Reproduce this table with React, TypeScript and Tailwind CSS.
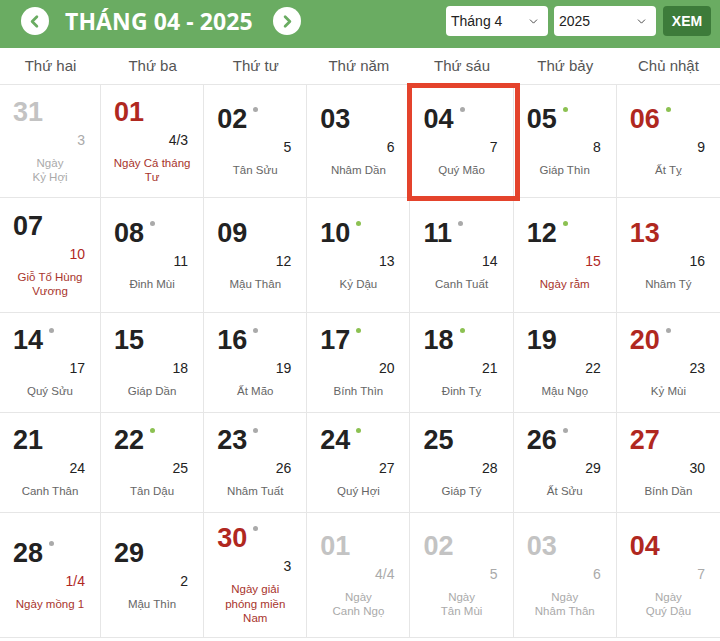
import React from 'react';
import { ChevronLeft, ChevronRight, ChevronDown } from 'lucide-react';

type Day = {
  d: string;
  l: string;
  label: string[];
  n?: 'red' | 'gray';
  dot?: 'g' | 'x';
  lr?: boolean; // lunar red
  br?: boolean; // label red
  o?: boolean; // other month
  sel?: boolean;
};

const weekDays = ['Thứ hai', 'Thứ ba', 'Thứ tư', 'Thứ năm', 'Thứ sáu', 'Thứ bảy', 'Chủ nhật'];

const rows: Day[][] = [
  [
    { d: '31', l: '3', label: ['Ngày', 'Kỷ Hợi'], n: 'gray', o: true },
    { d: '01', l: '4/3', label: ['Ngày Cá tháng', 'Tư'], n: 'red', br: true },
    { d: '02', l: '5', label: ['Tân Sửu'], dot: 'x' },
    { d: '03', l: '6', label: ['Nhâm Dần'] },
    { d: '04', l: '7', label: ['Quý Mão'], dot: 'x', sel: true },
    { d: '05', l: '8', label: ['Giáp Thìn'], dot: 'g' },
    { d: '06', l: '9', label: ['Ất Tỵ'], n: 'red', dot: 'g' },
  ],
  [
    { d: '07', l: '10', label: ['Giỗ Tổ Hùng', 'Vương'], lr: true, br: true },
    { d: '08', l: '11', label: ['Đinh Mùi'], dot: 'x' },
    { d: '09', l: '12', label: ['Mậu Thân'] },
    { d: '10', l: '13', label: ['Kỷ Dậu'], dot: 'g' },
    { d: '11', l: '14', label: ['Canh Tuất'], dot: 'x' },
    { d: '12', l: '15', label: ['Ngày rằm'], dot: 'g', lr: true, br: true },
    { d: '13', l: '16', label: ['Nhâm Tý'], n: 'red' },
  ],
  [
    { d: '14', l: '17', label: ['Quý Sửu'], dot: 'x' },
    { d: '15', l: '18', label: ['Giáp Dần'] },
    { d: '16', l: '19', label: ['Ất Mão'], dot: 'x' },
    { d: '17', l: '20', label: ['Bính Thìn'], dot: 'g' },
    { d: '18', l: '21', label: ['Đinh Tỵ'], dot: 'g' },
    { d: '19', l: '22', label: ['Mậu Ngọ'] },
    { d: '20', l: '23', label: ['Kỷ Mùi'], n: 'red', dot: 'x' },
  ],
  [
    { d: '21', l: '24', label: ['Canh Thân'] },
    { d: '22', l: '25', label: ['Tân Dậu'], dot: 'g' },
    { d: '23', l: '26', label: ['Nhâm Tuất'], dot: 'x' },
    { d: '24', l: '27', label: ['Quý Hợi'], dot: 'g' },
    { d: '25', l: '28', label: ['Giáp Tý'] },
    { d: '26', l: '29', label: ['Ất Sửu'], dot: 'x' },
    { d: '27', l: '30', label: ['Bính Dần'], n: 'red' },
  ],
  [
    { d: '28', l: '1/4', label: ['Ngày mồng 1'], dot: 'x', lr: true, br: true },
    { d: '29', l: '2', label: ['Mậu Thìn'] },
    { d: '30', l: '3', label: ['Ngày giải', 'phóng miền', 'Nam'], n: 'red', dot: 'x', br: true },
    { d: '01', l: '4/4', label: ['Ngày', 'Canh Ngọ'], n: 'gray', o: true },
    { d: '02', l: '5', label: ['Ngày', 'Tân Mùi'], n: 'gray', o: true },
    { d: '03', l: '6', label: ['Ngày', 'Nhâm Thân'], n: 'gray', o: true },
    { d: '04', l: '7', label: ['Ngày', 'Quý Dậu'], n: 'red', o: true },
  ],
];

export default function LichThang() {
  return (
    <div className="w-[720px] h-[641px] bg-white overflow-hidden font-['Liberation_Sans',Arial,sans-serif]">
      {/* HEADER */}
      <header className="h-[48px] bg-[#6aac62] flex items-center pb-[6px] pl-[21px] pr-[9px]">
        <button className="w-[28px] h-[28px] rounded-full bg-white flex items-center justify-center">
          <ChevronLeft size={19} strokeWidth={3.5} className="text-[#6aac62] -ml-[1px]" />
        </button>
        <h1 className="ml-[16px] mr-[20px] text-white text-[23px] font-bold tracking-[0.1px] font-['Open_Sans',sans-serif] leading-none">
          THÁNG 04 - 2025
        </h1>
        <button className="w-[28px] h-[28px] rounded-full bg-white flex items-center justify-center">
          <ChevronRight size={19} strokeWidth={3.5} className="text-[#6aac62] ml-[1px]" />
        </button>

        <div className="ml-auto flex items-center">
          <SelectBox value="Tháng 4" />
          <div className="w-[6px]" />
          <SelectBox value="2025" />
          <button className="ml-[7px] w-[48px] h-[30px] rounded-[4px] bg-[#3d7b3a] text-white text-[14px] font-bold">
            XEM
          </button>
        </div>
      </header>

      {/* WEEKDAY NAMES */}
      <div className="grid grid-cols-[101px_repeat(6,1fr)] h-[37px] border-b border-[#e6e6e6]">
        {weekDays.map((w) => (
          <div key={w} className="flex items-center justify-center pt-[1px] text-[15px] text-[#555]">
            {w}
          </div>
        ))}
      </div>

      {/* DAYS */}
      <div className="grid grid-cols-[101px_repeat(6,1fr)] grid-rows-[113px_115px_100px_100px_125px]">
        {rows.flat().map((c, i) => (
          <Cell key={i} c={c} last={i % 7 === 6} />
        ))}
      </div>
    </div>
  );
}

function SelectBox({ value }: { value: string }) {
  return (
    <div className="w-[102px] h-[30px] rounded-[4px] bg-white flex items-center pl-[5px] pr-[8px] text-[14px] text-[#222]">
      <span>{value}</span>
      <ChevronDown size={13} strokeWidth={1.6} className="ml-auto text-[#333]" />
    </div>
  );
}

function Cell({ c, last }: { c: Day; last: boolean }) {
  const numCls = c.n === 'red' ? 'text-[#b0281f]' : c.n === 'gray' ? 'text-[#c3c3c3]' : 'text-[#222]';
  const lunarCls = c.o ? 'text-[#aaa]' : c.lr ? 'text-[#b0281f]' : 'text-[#222]';
  const labelCls = c.o ? 'text-[#aaa]' : c.br ? 'text-[#a8342c]' : 'text-[#666]';

  return (
    <div className={`relative flex flex-col justify-center border-b border-[#e6e6e6] pl-[13px] pr-[15px] ${last ? '' : 'border-r'}`}>
      {c.sel && <div className="absolute -left-[3px] -right-[7px] -top-[2px] -bottom-[4px] border-[5px] border-[#e4432c] z-10" />}
      <div className="flex items-start">
        <span className={`text-[27px] font-bold leading-[28px] ${numCls}`}>{c.d}</span>
        {c.dot && (
          <span className={`ml-[6px] mt-[2px] w-[5px] h-[5px] rounded-full ${c.dot === 'g' ? 'bg-[#8cc152]' : 'bg-[#aaa]'}`} />
        )}
      </div>
      <div className={`mt-[6px] text-right text-[14px] leading-4 ${lunarCls}`}>{c.l}</div>
      <div className={`mt-[8px] -ml-[5px] -mr-[7px] text-center text-[11.5px] leading-[14.5px] whitespace-nowrap ${labelCls}`}>
        {c.label.map((t, k) => (
          <div key={k}>{t}</div>
        ))}
      </div>
    </div>
  );
}
